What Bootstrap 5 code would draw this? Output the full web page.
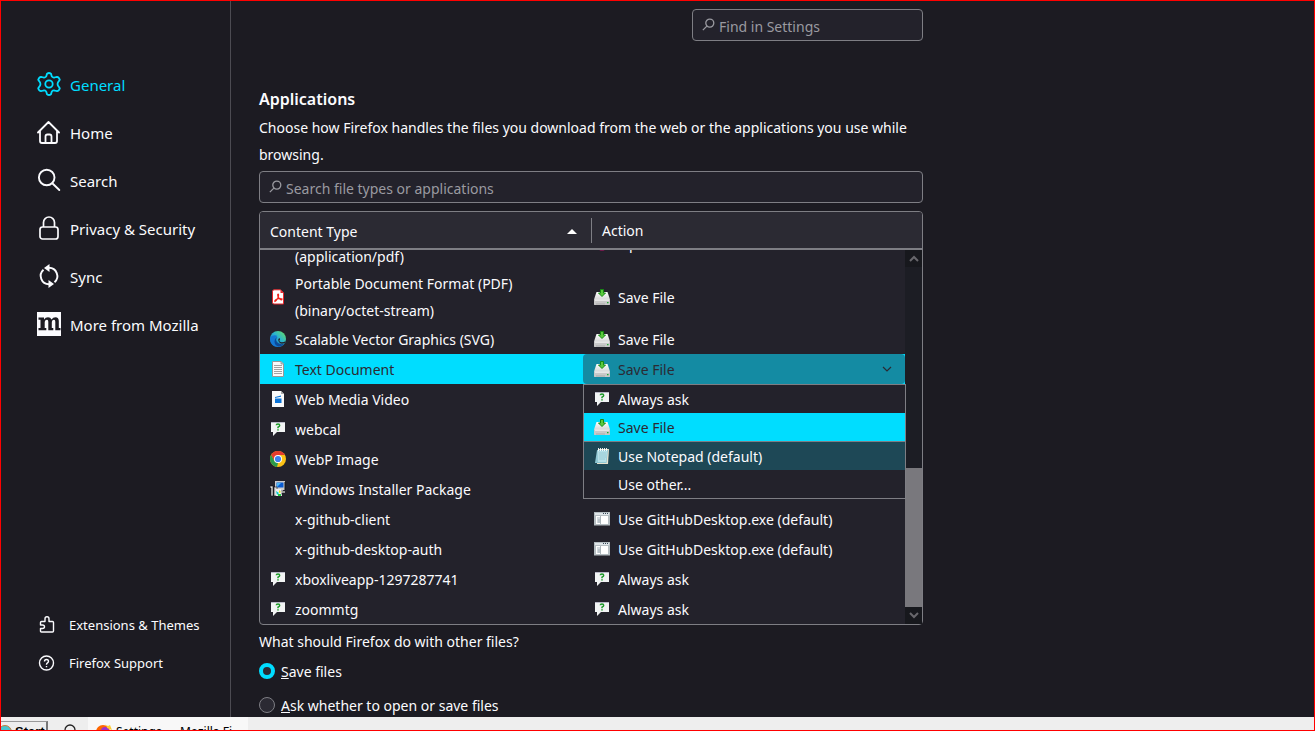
<!DOCTYPE html>
<html lang="en">
<head>
<meta charset="utf-8">
<meta name="viewport" content="width=device-width, initial-scale=1">
<title>Settings</title>
<link href="https://cdn.jsdelivr.net/npm/bootstrap@5.3.0/dist/css/bootstrap.min.css" rel="stylesheet">
<style>
:root{--accent:#00ddff;--page:#1c1b22;--field:#23222b;--head:#2b2a33;--line:#7e7e84;--text:#fbfbfe;--muted:#9a9aa0}
body{font-family:"Noto Sans","Open Sans",sans-serif;font-size:14px;line-height:27px;color:var(--text);background:var(--page);border:1px solid #f00;height:100vh;overflow:hidden}
svg{display:block;flex:none}
.sidebar{width:230px;flex:none;border-right:1px solid #4c4b52;padding:60px 0 35px}
.sidebar a{color:var(--text);text-decoration:none;display:flex;align-items:center}
.cat{height:48px;padding-left:36px;gap:9px;font-size:15px}
.cat svg{margin-bottom:2px}
.sidebar .cat.active{color:var(--accent)}
.aux{height:38px;padding-left:36px;gap:10px;font-size:13px}
.aux svg{margin:0 3px 2px 0}
.pane{padding:8px 28px 0;min-width:0}
.pane-inner{max-width:664px}
.field{height:32px;background:var(--field);border:1px solid var(--line);border-radius:4px;padding-left:9px;gap:4px;color:var(--muted)}
.field input{background:none;border:0;outline:0;color:inherit;padding:2px 0 0;flex:1;min-width:0;height:30px}
.field input::placeholder{color:var(--muted);opacity:1}
.field svg{margin-bottom:2px}
.find{width:231px}
.filter{margin-top:3px}
h2{font-size:16px;font-weight:600;line-height:26px;margin:45px 0 2px}
.host{position:relative;margin-top:8px}
.tree{display:grid;grid-template-columns:1fr 17px;grid-template-rows:38px 374px;border:1px solid var(--line);border-radius:4px;background:var(--field)}
.tree table{display:contents}
.tree thead{grid-column:1/-1;background:var(--head);border-bottom:2px solid var(--line);border-radius:3px 3px 0 0;display:block}
.tree tr{display:grid;grid-template-columns:1fr 322px}
.tree thead tr{grid-template-columns:1fr 331px;height:36px;align-items:center}
.tree th{font-weight:400;padding-top:2px}
.tree thead th:first-child{padding:2px 14px 0 10px;display:flex;justify-content:space-between;align-items:center}
.tree thead th:last-child{padding-left:10px;border-left:1px solid var(--line);line-height:22px}
.tree tbody{display:flex;flex-direction:column;justify-content:flex-end;overflow:hidden}
.tree tbody tr{min-height:30px;flex:none}
.tree td{display:flex;align-items:center;gap:9px;padding:0 0 0 10px}
.tree td+td{gap:8px;padding-left:11px}
.tree tr.twoline{height:54px}
.ico{width:16px;flex:none}
.tree tr.sel{background:var(--accent);color:#2b2a33}
.tree tr.sel td+td{padding:0;position:relative}
.tree select{appearance:none;width:100%;height:30px;border:0;border-radius:4px;background:#148ba3;color:#2b2a33;padding:0 35px;outline:0}
.sel .s-ico{position:absolute;left:11px;top:7px}
.sel .s-arrow{position:absolute;right:13px;top:11px}
.choices{position:absolute;top:173px;right:17px;width:323px;background:var(--field);border:1px solid var(--line);z-index:2}
.choices button{display:flex;align-items:center;gap:8px;width:100%;height:28px;border:0;background:none;color:inherit;padding:0 0 0 10px;text-align:left}
.choices .on{background:var(--accent);color:#2b2a33}
.choices .def{background:#1e4856;border-top:1px solid var(--line);height:29px}
.bar{background:#1c1d24;display:flex;flex-direction:column}
.bar span{height:17px;display:grid;place-items:center;background:#17181d}
.thumb{background:#79787d;height:139px;margin-top:auto}
.ask-line{line-height:25px}
.opt{gap:6px;height:34px;display:flex;align-items:center}
.opt input{appearance:none;width:16px;height:16px;margin:0;border:1px solid var(--line);border-radius:50%;background:var(--head)}
.opt input:checked{border:4px solid var(--accent)}
.task{height:13px;flex:none;background:#eee;color:#000;font-size:12px;line-height:16px;overflow:hidden}
.task button{border:0;background:none;padding:0;color:inherit}
.task .start{width:47px;height:24px;border-right:2px solid #777;border-top:1px solid #999;margin-top:4px;font:700 13px/20px "Liberation Sans",sans-serif;gap:3px}
.task .wtab{width:160px;height:30px;background:#f8f8f8;padding:7px 0 0 8px;gap:4px}
.task .find-btn{margin:7px 11px 0 15px}
</style>
</head>
<body class="d-flex flex-column">
<svg width="0" height="0" class="position-absolute" aria-hidden="true">
<defs>
<linearGradient id="gDisk" x2="0" y2="1"><stop stop-color="#fff"/><stop offset="1" stop-color="#bbb"/></linearGradient>
<linearGradient id="gEdge" x1="1" y1="0" x2="0" y2="1"><stop stop-color="#6be25a"/><stop offset=".45" stop-color="#2bb5cf"/><stop offset="1" stop-color="#0b55b8"/></linearGradient>
<symbol id="ask" viewBox="0 0 16 16"><path d="M1 1h14v10H7l-4 4v-4H1z" fill="#f2f4f4"/><path d="M1 1.500h14" stroke="#aab" stroke-width=".8"/><path d="M6.300 4.200q0-1.200 1.700-1.200t1.700 1.400q0 .9-1.700 1.800v1" fill="none" stroke="#1f9a2b" stroke-width="1.500"/><path d="M7.200 8.300h1.600v1.300H7.200z" fill="#1f9a2b"/></symbol>
<symbol id="save" viewBox="0 0 16 16"><path d="M2.500 3h11L16 10.500V15q0 1-1 1H1q-1 0-1-1v-4.500z" fill="url(#gDisk)"/><path d="M0 11h16v4q0 1-1 1H1q-1 0-1-1z" fill="#c9c9c9"/><path d="M1 11.200h14" stroke="#fff" stroke-width=".8"/><path d="M13 13h1.500v1.200H13z" fill="#2a3"/><path d="M2 15h9" stroke="#999" stroke-width=".6"/><path d="M6.500.5h3V4h2L8 7.500 4.500 4h2z" fill="#5cc93d" stroke="#178a14"/></symbol>
<symbol id="exe" viewBox="0 0 16 16"><path d="M0 1h16v13.500H0z" fill="#b4bdc1"/><path d="M1 2h14v2H1z" fill="#dfe5e8"/><path d="M9 2.500h1m1 0h1m1 0h1" stroke="#345" stroke-width="1.200"/><path d="M2 5h12v8H2z" fill="#fff"/><path d="M3 6h3.500v6H3z" fill="#d2dade"/><path d="M4 9h2M4 11h2M6.500 5v8" stroke="#9aa6ac" stroke-width=".8"/></symbol>
<symbol id="glass" viewBox="0 0 12 12"><circle cx="7.200" cy="4.700" r="3.700" fill="none" stroke="currentColor" stroke-width="1.200"/><path d="M4.500 7.500.8 11.200" stroke="currentColor" stroke-width="1.200"/></symbol>
</defs>
</svg>
<div class="d-flex flex-grow-1 overflow-hidden">
<nav class="sidebar d-flex flex-column" aria-label="Categories">
<a class="cat active" href="#general"><svg width="24" height="24" viewBox="0 0 24 24" fill="none" stroke="currentColor" stroke-width="1.800" stroke-linejoin="round"><circle cx="12" cy="12" r="3.700"/><path d="M10 1.700Q12 .300 14 1.700L14.800 4.500Q16 5.800 17.400 5.500L20 4.800Q22 5 22.800 7.800L20.900 10.500Q20.300 12 20.900 13.500L22.800 16.200Q22 19 20 19.200L17.400 18.500Q16 18.200 14.800 19.500L14 22.300Q12 23.700 10 22.300L9.200 19.500Q8 18.200 6.600 18.500L4 19.200Q2 19 1.200 16.200L3.100 13.500Q3.700 12 3.100 10.500L1.200 7.800Q2 5 4 4.800L6.600 5.500Q8 5.800 9.200 4.500Z"/></svg>General</a>
<a class="cat" href="#home"><svg width="24" height="24" viewBox="0 0 24 24" fill="none" stroke="currentColor" stroke-width="1.800" stroke-linecap="round" stroke-linejoin="round"><path d="M1 12.500 11.500 2 22 12.500M3 11v10q0 2 2 2h13q2 0 2-2V11M8.500 23v-6.500q0-2 2-2h2q2 0 2 2V23"/></svg>Home</a>
<a class="cat" href="#search"><svg width="24" height="24" viewBox="0 0 24 24" fill="none" stroke="currentColor" stroke-width="1.900" stroke-linecap="round"><circle cx="9.700" cy="9.500" r="7.800"/><path d="M15.300 15.300 22.300 22"/></svg>Search</a>
<a class="cat" href="#privacy"><svg width="24" height="24" viewBox="0 0 24 24" fill="none" stroke="currentColor" stroke-width="1.700"><rect x="3" y="11" width="18" height="12" rx="2.500"/><path d="M6.500 11V6.500a5.500 5.500 0 0 1 11 0V11"/></svg>Privacy &amp; Security</a>
<a class="cat" href="#sync"><svg width="24" height="24" viewBox="0 0 24 24" fill="none" stroke="currentColor" stroke-width="1.900"><path d="M12 3.700a8.300 8.300 0 0 1 5.500 14.500M12 20.300A8.300 8.300 0 0 1 6.500 5.800"/><path d="M7 4 12.500 0v8zM17 20l-5.500-4v8z" fill="currentColor" stroke="none"/></svg>Sync</a>
<a class="cat" href="#more"><svg width="24" height="24" viewBox="0 0 24 24"><path fill="#fbfbfe" d="M0 0h24v24H0z"/><path fill="#1c1b22" d="M1.500 5.500H7v2Q8.500 5.200 11 5.200q2.600 0 3.500 2.400Q16 5.200 18.500 5.200q3.300 0 3.300 3.800v7H23.500v2.200H18.300V9.800q0-2-1.300-2-2.200 0-2.200 3V16h1.500v2.200H11.300V9.800q0-2-1.300-2-2.300 0-2.300 3V16h1.600v2.200H1.500V16h2V7.700h-2z"/></svg>More from Mozilla</a>
<div class="mt-auto">
<a class="aux" href="#addons"><svg width="19" height="19" viewBox="0 0 19 19" fill="none" stroke="currentColor" stroke-width="1.400" stroke-linejoin="round"><path d="M4.500 6.500H8V3.800q0-2 2-2t2 2v2.700h3.500q1 0 1 1V16q0 1-1 1h-11q-1 0-1-1v-2.500h2q2 0 2-1.700T5.500 10h-2V7.500q0-1 1-1z"/></svg>Extensions &amp; Themes</a>
<a class="aux" href="#support"><svg width="19" height="19" viewBox="0 0 19 19" fill="none" stroke="currentColor" stroke-width="1.400"><circle cx="9.500" cy="10" r="7"/><path d="M7.500 8.500q0-2 2-2t2 1.800q0 1-1 1.600t-1 1.500v.4M9.500 13v1.300"/></svg>Firefox Support</a>
</div>
</nav>
<main class="pane flex-grow-1">
<div class="pane-inner">
<div class="field find d-flex align-items-center ms-auto"><svg width="13" height="13"><use href="#glass"/></svg><input type="search" aria-label="Find in Settings" placeholder="Find in Settings"></div>
<h2>Applications</h2>
<p class="mb-0">Choose how Firefox handles the files you download from the web or the applications you use while browsing.</p>
<div class="field filter d-flex align-items-center"><svg width="13" height="13"><use href="#glass"/></svg><input type="search" aria-label="Search file types or applications" placeholder="Search file types or applications"></div>
<div class="host">
<div class="tree">
<table>
<thead><tr><th scope="col">Content Type<svg width="10" height="5" viewBox="0 0 10 5"><path d="M5 0 10 5H0z" fill="#fff"/></svg></th><th scope="col">Action</th></tr></thead>
<tbody>
<tr class="twoline"><td class="align-items-end"><span class="ico"></span>(application/pdf)</td><td><svg width="16" height="16" viewBox="0 0 16 16"><circle cx="8" cy="8" r="7.500" fill="#c0106c"/></svg>Open in Firefox</td></tr>
<tr class="twoline"><td><svg width="16" height="16" viewBox="0 0 16 16"><path d="M4 .8h6.500L13.500 4v11H4q-1.500 0-1.500-1.500v-11Q2.500.8 4 .8z" fill="#fff" stroke="#e5252a"/><path d="M10.500 1v3h3z" fill="#e5252a"/><path d="M5 12.500q-1-1 1.500-2.200T10.500 9.500q2 0 1.500 1t-2.500-.6T7.600 5.700q.6-1.200 1 0t-1 3.800T5 12.500z" fill="none" stroke="#f2231a" stroke-width="1.100"/></svg><span>Portable Document Format (PDF)<br>(binary/octet-stream)</span></td><td><svg width="16" height="16"><use href="#save"/></svg>Save File</td></tr>
<tr><td><svg width="16" height="16" viewBox="0 0 16 16"><circle cx="8" cy="8" r="8" fill="url(#gEdge)"/><path d="M.5 6q3.500-3 7-1Q5 6 5.500 10q.8 4.500 5 5.500Q4 17 1 12-.5 9 .5 6z" fill="#1478d4"/><path d="M7.500 6q-3 3 .5 6 3 2 6.500.5-2 3-6 3-4-1-4-5Q5 6.500 7.500 6z" fill="#0c4a9a"/><path d="M9.500 7q1.300 1-.2 2.800 0 1.200 2.400 1.400 2.500 0 4-1.200l-.9 2q-3 1.300-5 .1T8.300 8z" fill="#23222b"/></svg>Scalable Vector Graphics (SVG)</td><td><svg width="16" height="16"><use href="#save"/></svg>Save File</td></tr>
<tr class="sel"><td><svg width="16" height="16" viewBox="0 0 16 16"><path d="M2.500.5h8.500l2.500 2.500v12.500h-11z" fill="#fafafa" stroke="#999"/><path d="M4 4.500h8M4 6.500h8M4 8.500h8M4 10.500h8M4 12.500h8" stroke="#999" stroke-width=".9"/><path d="M11 .5V3h2.500" fill="#ccc" stroke="#888" stroke-width=".7"/></svg>Text Document</td><td><svg class="s-ico" width="16" height="16"><use href="#save"/></svg><select aria-label="Action for Text Document"><option>Save File</option></select><svg class="s-arrow" width="10" height="8" viewBox="0 0 10 8"><path d="m1 2 4 4 4-4" fill="none" stroke="#2b2a33" stroke-width="1.200"/></svg></td></tr>
<tr><td><svg width="16" height="16" viewBox="0 0 16 16"><path d="M2 0h9l3 3v13H2z" fill="#fafafa"/><path d="M11 0v3h3z" fill="#aaa"/><path d="M5 6l6-1.500v1.300L5 7zM5 7.500h6.500V12H5z" fill="#0b74d8"/></svg>Web Media Video</td><td></td></tr>
<tr><td><svg width="16" height="16"><use href="#ask"/></svg>webcal</td><td></td></tr>
<tr><td><svg width="16" height="16" viewBox="0 0 16 16"><circle cx="8" cy="8" r="8" fill="#fbc116"/><path d="M8 4h6.930A8 8 0 0 0 1.070 4L4.500 10z" fill="#e33b2e"/><path d="M1.070 4 4.500 10l3.500 2-1 4A8 8 0 0 1 1.070 4z" fill="#2a9a4b"/><circle cx="8" cy="8" r="4" fill="#fff"/><circle cx="8" cy="8" r="3.100" fill="#3d7ff0"/></svg>WebP Image</td><td></td></tr>
<tr><td><svg width="16" height="16" viewBox="0 0 16 16"><path d="M5 0h10v9H5z" fill="#ccc"/><path d="M6.500 1.500h7v5h-7z" fill="#0a5ad0"/><path d="M7 2h4l-4 4z" fill="#49b7f5"/><path d="M8 9h5v1h2v2H6z" fill="#999"/><path d="M0 5h3v10H1V7H0zM4 6h3v9H4z" fill="#ddd" stroke="#111" stroke-width=".6"/><path d="M6 8h5l1 7H6z" fill="#eee"/><path d="m6 10 3 2-2 2z" fill="#0cc"/><path d="m9 9 2 2-2 1z" fill="#ee0"/><path d="M8 13h3v2H8z" fill="#2c4"/><path d="M15 1v8" stroke="#111"/></svg>Windows Installer Package</td><td></td></tr>
<tr><td><span class="ico"></span>x-github-client</td><td><svg width="16" height="16"><use href="#exe"/></svg>Use GitHubDesktop.exe (default)</td></tr>
<tr><td><span class="ico"></span>x-github-desktop-auth</td><td><svg width="16" height="16"><use href="#exe"/></svg>Use GitHubDesktop.exe (default)</td></tr>
<tr><td><svg width="16" height="16"><use href="#ask"/></svg>xboxliveapp-1297287741</td><td><svg width="16" height="16"><use href="#ask"/></svg>Always ask</td></tr>
<tr><td><svg width="16" height="16"><use href="#ask"/></svg>zoommtg</td><td><svg width="16" height="16"><use href="#ask"/></svg>Always ask</td></tr>
</tbody>
</table>
<div class="bar" aria-hidden="true"><span><svg width="10" height="7" viewBox="0 0 10 7"><path d="m1 6 4-4 4 4" fill="none" stroke="#68676c" stroke-width="2"/></svg></span><div class="thumb"></div><span><svg width="10" height="7" viewBox="0 0 10 7"><path d="m1 1 4 4 4-4" fill="none" stroke="#68676c" stroke-width="2"/></svg></span></div>
</div>
<div class="choices">
<button type="button"><svg width="16" height="16"><use href="#ask"/></svg>Always ask</button>
<button type="button" class="on"><svg width="16" height="16"><use href="#save"/></svg>Save File</button>
<button type="button" class="def"><svg width="16" height="16" viewBox="0 0 16 16"><path d="M4 1h11l-1 15H3z" fill="#e6e1cf"/><path d="M3 2h11l-1.500 13H1z" fill="#8fc7d3"/><path d="M3.500 3h9.500l-1 11H4z" fill="#b5e0e8"/><path d="M5 5h7M5 7h7M5 9h7M5 11h6" stroke="#86bcc8" stroke-width=".6"/><path d="M4.500 0v3M6.500 0v3M8.500 0v3M10.500 0v3M12.500 0v3" stroke="#fff" stroke-width=".9"/></svg>Use Notepad (default)</button>
<button type="button"><span class="ico"></span>Use other...</button>
</div>
</div>
<p class="ask-line mb-0 pt-1">What should Firefox do with other files?</p>
<div class="opt"><input type="radio" name="other" id="r1" checked><label for="r1"><u>S</u>ave files</label></div>
<div class="opt"><input type="radio" name="other" id="r2"><label for="r2"><u>A</u>sk whether to open or save files</label></div>
</div>
</main>
</div>
<footer class="task d-flex">
<button type="button" class="start d-flex"><svg width="11" height="16" viewBox="0 0 11 16"><circle cx="4" cy="10" r="6.500" fill="#49c5cf" stroke="#c77c3b"/></svg><span>Start</span></button>
<button type="button" aria-label="Search" class="find-btn"><svg width="14" height="14" viewBox="0 0 14 14"><circle cx="7" cy="6" r="5" fill="none" stroke="#222" stroke-width="1.300"/></svg></button>
<button type="button" class="wtab d-flex"><svg width="16" height="16" viewBox="0 0 16 16"><circle cx="7" cy="8" r="7" fill="#f60"/><circle cx="9" cy="7" r="4" fill="#93c"/><path d="M8 0q3 1 3 4l5 2-2-5-2 1z" fill="#fc3"/></svg><span>Settings — Mozilla Fi...</span></button>
</footer>
<script src="https://cdn.jsdelivr.net/npm/bootstrap@5.3.0/dist/js/bootstrap.bundle.min.js"></script>
</body>
</html>
